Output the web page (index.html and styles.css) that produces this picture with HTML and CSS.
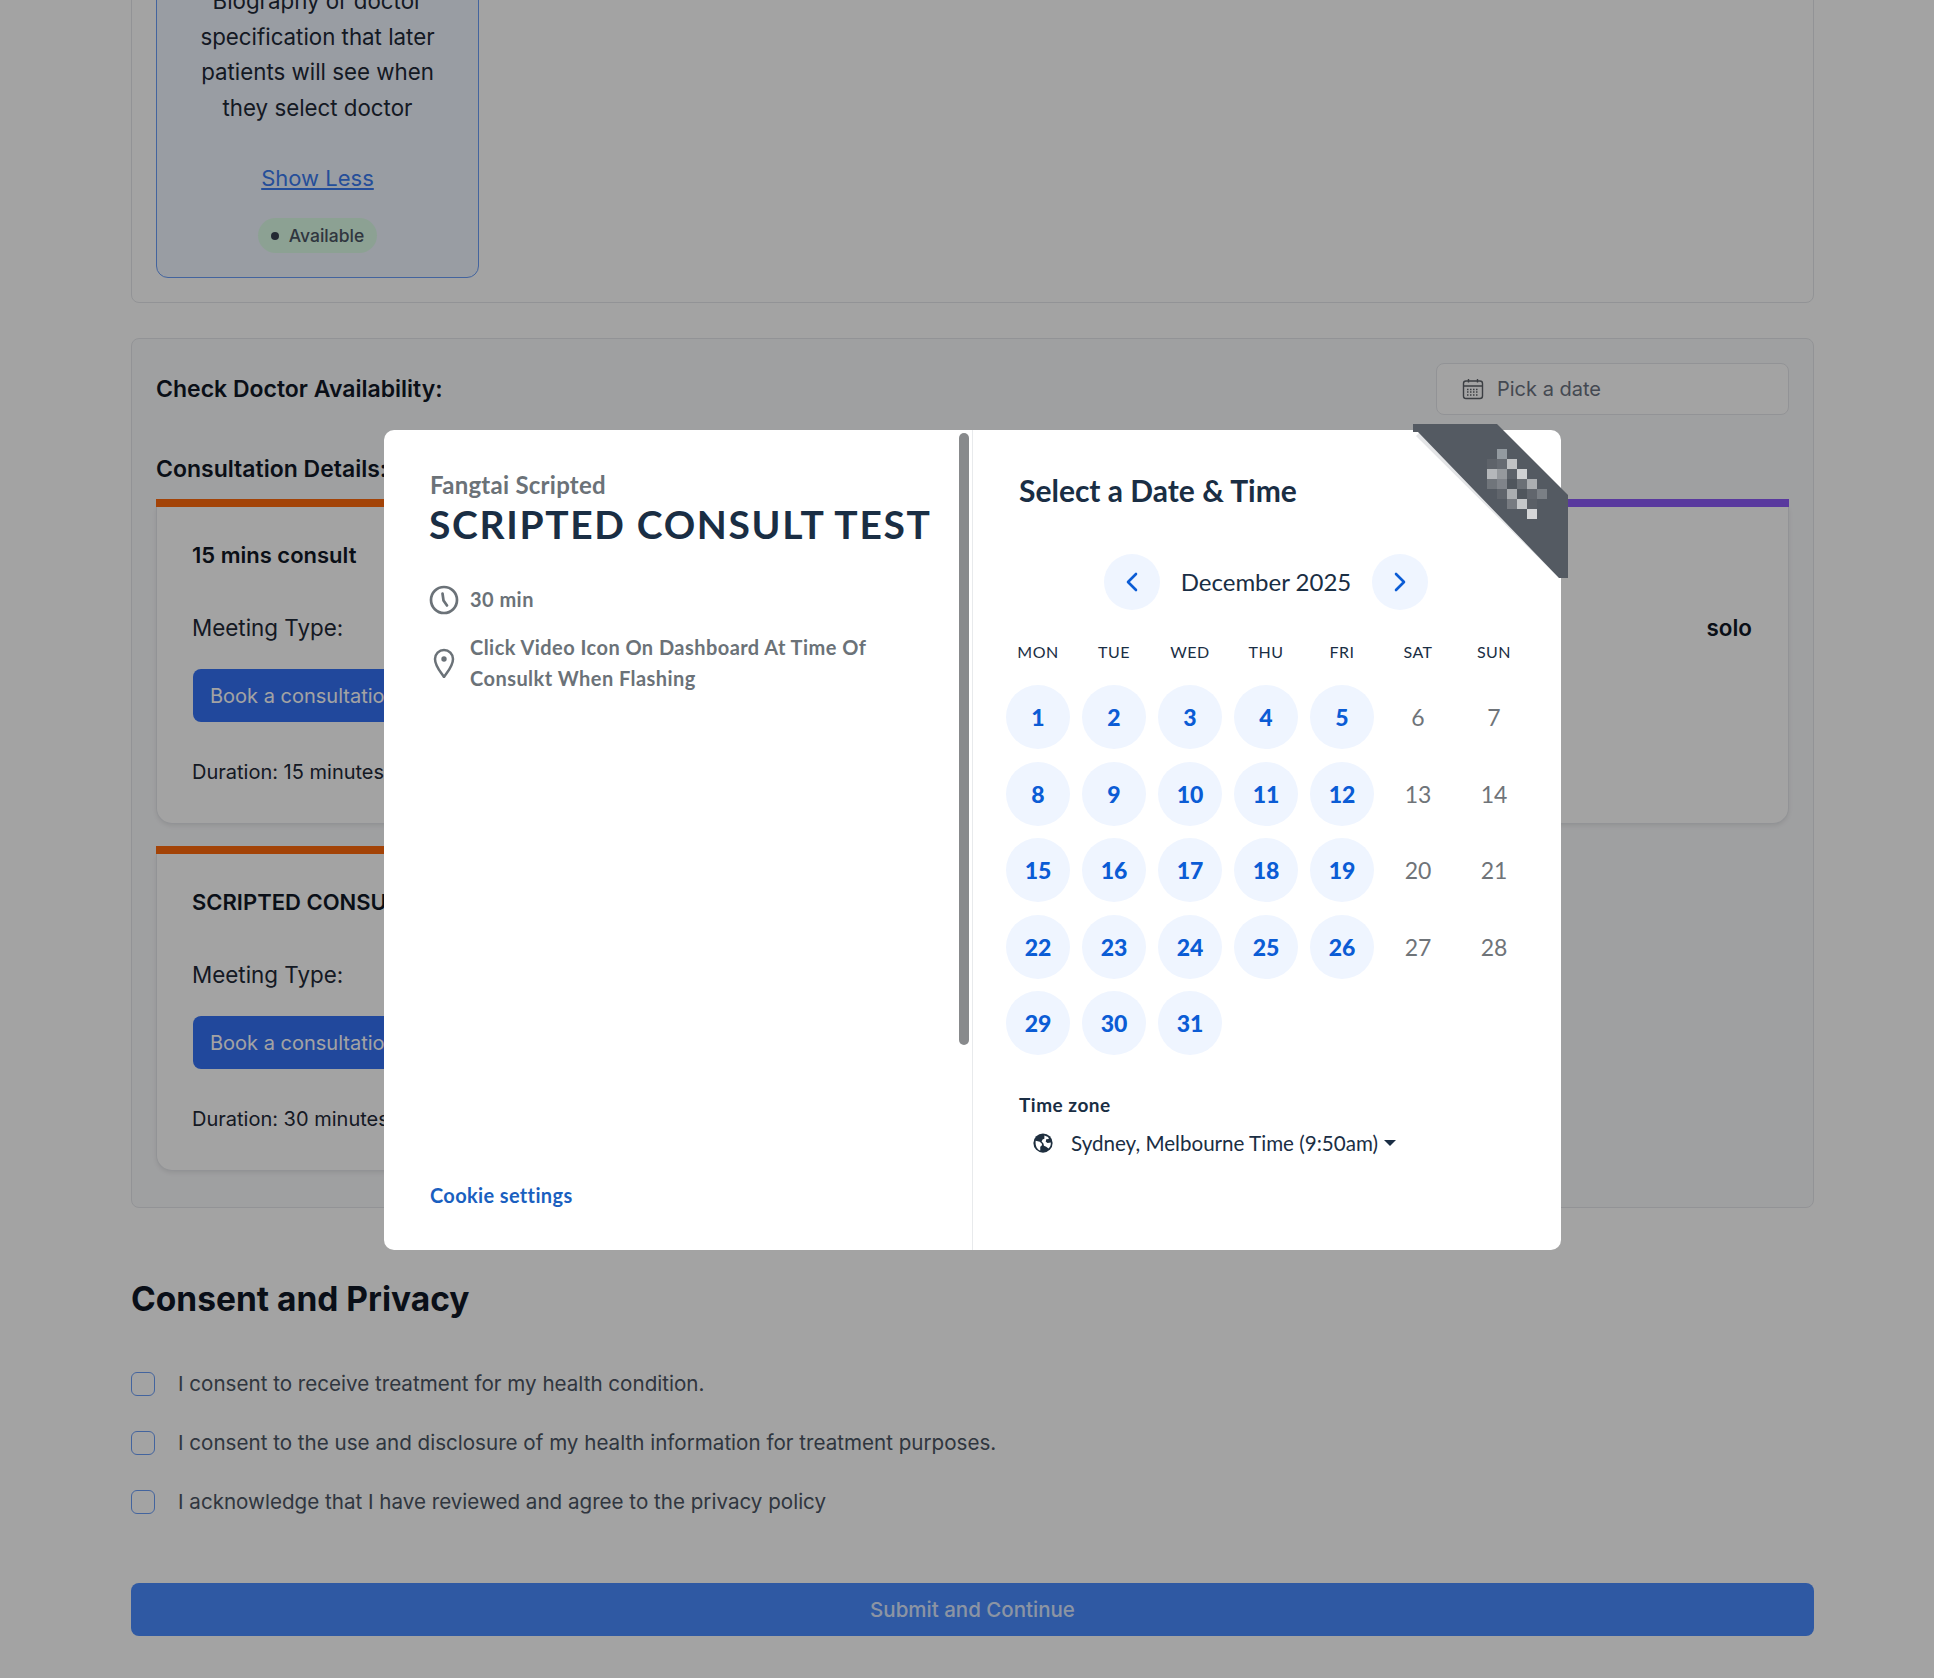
FILE: index.html
```html
<!DOCTYPE html>
<html lang="en">

<head>
    <meta charset="UTF-8">
    <meta name="viewport" content="width=device-width, initial-scale=1.0">
    <title>Book a consultation</title>
    <link rel="stylesheet" href="styles.css">
</head>

<body>
    <main class="page">
        <section class="panel doctors">
            <div class="doctor-card">
                <p class="bio">Biography or doctor specification that later patients will see when they select doctor</p>
                <a class="show-less" href="#">Show Less</a>
                <span class="pill"><i class="pill-dot"></i>Available</span>
            </div>
        </section>

        <section class="panel availability">
            <div class="avail-head">
                <h3>Check Doctor Availability:</h3>
                <div class="date-input">
                    <svg class="cal-icon" viewBox="0 0 24 24" fill="none" stroke="#5d6268" stroke-width="1.4">
                        <rect x="2.5" y="4" width="19" height="17.5" rx="2.5"/>
                        <path d="M2.5 9h19M7.5 2v3.500M16.500 2v3.500"/>
                        <path d="M6 12.500h12M6 15h12M6 18h12" stroke-dasharray="1.500 1.500"/>
                    </svg>
                    <span>Pick a date</span>
                </div>
            </div>

            <h3 class="details-title">Consultation Details:</h3>

            <div class="consult-card">
                <div class="accent-row"><span class="accent orange"></span><span class="accent purple"></span></div>
                <div class="consult-body">
                    <h4>15 mins consult</h4>
                    <div class="meeting-row"><span>Meeting Type:</span><strong>solo</strong></div>
                    <button class="book-btn">Book a consultation</button>
                    <p class="duration">Duration: 15 minutes</p>
                </div>
            </div>

            <div class="consult-card second">
                <div class="accent-row"><span class="accent orange"></span></div>
                <div class="consult-body">
                    <h4>SCRIPTED CONSULT TEST</h4>
                    <div class="meeting-row"><span>Meeting Type:</span></div>
                    <button class="book-btn">Book a consultation</button>
                    <p class="duration">Duration: 30 minutes</p>
                </div>
            </div>
        </section>

        <h2 class="consent-title">Consent and Privacy</h2>
        <div class="consent-list">
            <label class="consent-row"><span class="check"></span>I consent to receive treatment for my health condition.</label>
            <label class="consent-row"><span class="check"></span>I consent to the use and disclosure of my health information for treatment purposes.</label>
            <label class="consent-row"><span class="check"></span>I acknowledge that I have reviewed and agree to the privacy policy</label>
        </div>
        <button class="submit-btn">Submit and Continue</button>
    </main>

    <div class="overlay"></div>

    <div class="modal">
        <div class="event-pane">
            <div class="scroll-thumb"></div>
            <div class="host">Fangtai Scripted</div>
            <h1 class="event-name">SCRIPTED CONSULT TEST</h1>
            <div class="event-meta duration-meta">
                <svg class="meta-icon" viewBox="0 0 30 30" fill="none" stroke="#6b7278" stroke-width="2.700" stroke-linecap="round">
                    <circle cx="15" cy="15" r="13"/>
                    <path d="M13.500 8.500l1 7 3.500 5"/>
                </svg>
                <span>30 min</span>
            </div>
            <div class="event-meta location-meta">
                <svg class="meta-icon" viewBox="0 0 30 30" fill="none" stroke="#6b7278" stroke-width="2.500">
                    <path d="M15 29C11 23 6 18 6 11a9 9 0 0 1 18 0C24 18 19 23 15 29z"/>
                    <circle cx="15" cy="11" r="2.700" fill="#6b7278" stroke="none"/>
                </svg>
                <span>Click Video Icon On Dashboard At Time Of Consulkt When Flashing</span>
            </div>
            <a class="cookie-link" href="#">Cookie settings</a>
        </div>

        <div class="date-pane">
            <h2 class="date-title">Select a Date &amp; Time</h2>
            <div class="month-nav">
                <span class="nav-btn">
                    <svg viewBox="0 0 16 24" fill="none" stroke="#0b5cd5" stroke-width="2.600" stroke-linecap="round" stroke-linejoin="round"><path d="M12 4l-8 8 8 8"/></svg>
                </span>
                <span class="month-label">December 2025</span>
                <span class="nav-btn">
                    <svg viewBox="0 0 16 24" fill="none" stroke="#0b5cd5" stroke-width="2.600" stroke-linecap="round" stroke-linejoin="round"><path d="M4 4l8 8-8 8"/></svg>
                </span>
            </div>

            <div class="cal-grid">
                <span class="dow">MON</span><span class="dow">TUE</span><span class="dow">WED</span><span class="dow">THU</span><span class="dow">FRI</span><span class="dow">SAT</span><span class="dow">SUN</span>
                <span class="day open">1</span><span class="day open">2</span><span class="day open">3</span><span class="day open">4</span><span class="day open">5</span><span class="day">6</span><span class="day">7</span>
                <span class="day open">8</span><span class="day open">9</span><span class="day open">10</span><span class="day open">11</span><span class="day open">12</span><span class="day">13</span><span class="day">14</span>
                <span class="day open">15</span><span class="day open">16</span><span class="day open">17</span><span class="day open">18</span><span class="day open">19</span><span class="day">20</span><span class="day">21</span>
                <span class="day open">22</span><span class="day open">23</span><span class="day open">24</span><span class="day open">25</span><span class="day open">26</span><span class="day">27</span><span class="day">28</span>
                <span class="day open">29</span><span class="day open">30</span><span class="day open">31</span>
            </div>

            <div class="tz-label">Time zone</div>
            <div class="tz-row">
                <svg class="globe" viewBox="0 0 24 24">
                    <circle cx="12" cy="12" r="10.500" fill="#1f2f3f"/>
                    <path d="M4 9.500l4.500 1 2.500 2.500-.5 2-1.500 1v4.200C6 19.300 3.300 15.500 4 9.500zM13.500 3.800l4 1.700 1 2-3 .5-.5 2.500 2 1.500 3.500-.5c.3 2.800-.7 5-2.500 6.500l-2.500-2-2.500-1-.5-2.500-2-2.200 1-2 2-1z" fill="#fff"/>
                </svg>
                <span>Sydney, Melbourne Time (9:50am)</span>
                <i class="tz-caret"></i>
            </div>
        </div>

        <!-- corner ribbon, pixelated in the source -->
        <svg class="ribbon" viewBox="0 0 156 155" width="156" height="155">
            <polygon points="6,9 149,152 146,154 3,12" fill="#e4e5e7"/>
            <polygon points="0,0 84,0 155,71 155,154 146,154 5,8 0,8" fill="#545a62"/>
            <g>
                <rect x="84" y="25" width="10" height="10" fill="#939aa0"/>
                <rect x="74" y="35" width="10" height="10" fill="#5e636a"/>
                <rect x="84" y="35" width="10" height="10" fill="#666b72"/>
                <rect x="94" y="35" width="10" height="10" fill="#c0c2c4"/>
                <rect x="74" y="45" width="10" height="10" fill="#b4b7ba"/>
                <rect x="84" y="45" width="10" height="10" fill="#95999d"/>
                <rect x="94" y="45" width="10" height="10" fill="#5c6269"/>
                <rect x="104" y="45" width="10" height="10" fill="#cfd1d3"/>
                <rect x="74" y="55" width="10" height="10" fill="#70757b"/>
                <rect x="84" y="55" width="10" height="10" fill="#80848a"/>
                <rect x="94" y="55" width="10" height="10" fill="#50565d"/>
                <rect x="104" y="55" width="10" height="10" fill="#6b7076"/>
                <rect x="114" y="55" width="10" height="10" fill="#abaeb1"/>
                <rect x="84" y="65" width="10" height="10" fill="#60656c"/>
                <rect x="94" y="65" width="10" height="10" fill="#aaadb0"/>
                <rect x="104" y="65" width="10" height="10" fill="#50565d"/>
                <rect x="114" y="65" width="10" height="10" fill="#61666d"/>
                <rect x="124" y="65" width="10" height="10" fill="#7a7f85"/>
                <rect x="94" y="75" width="10" height="10" fill="#777b81"/>
                <rect x="104" y="75" width="10" height="10" fill="#c5c7c9"/>
                <rect x="114" y="75" width="10" height="10" fill="#5a5f66"/>
                <rect x="114" y="85" width="10" height="10" fill="#d5d6d8"/>
            </g>
        </svg>
    </div>
</body>

</html>
```
FILE: styles.css
```css
* {
    box-sizing: border-box;
    margin: 0;
}

body {
    height: 1678px;
    overflow: hidden;
    background-color: #fff;
    font-family: "Inter", "Liberation Sans", sans-serif;
    color: #111827;
    position: relative;
}

.page {
    margin: -59px 120px 0 131px;
}

.panel {
    border: 1px solid #e5e7eb;
    border-radius: 8px;
    padding: 0 24px;
}

/* doctor card, scrolled partly off screen */
.doctors {
    padding-bottom: 24px;
}

.doctor-card {
    width: 323px;
    padding: 40px 24px 24px;
    border: 1.5px solid #6a9df8;
    border-radius: 12px;
    background-color: #eff6ff;
    display: flex;
    flex-direction: column;
    align-items: center;
    text-align: center;
}

.bio {
    font-size: 22.300px;
    line-height: 35.500px;
    color: #1f2937;
}

.show-less {
    margin-top: 36px;
    font-size: 22px;
    line-height: 35px;
    color: #3b7bf0;
}

.pill {
    margin-top: 22px;
    height: 35px;
    padding: 0 13px;
    display: inline-flex;
    align-items: center;
    gap: 10px;
    border-radius: 18px;
    background-color: #dcfce7;
    font-size: 17.500px;
    font-weight: 500;
    color: #4b5563;
}

.pill-dot {
    width: 8px;
    height: 8px;
    border-radius: 50%;
    background-color: #374151;
}

.availability {
    margin-top: 35px;
    padding: 24px 24px 36px;
    background-color: #f9fafc;
}

.avail-head {
    display: flex;
    justify-content: space-between;
    align-items: center;
}

h3 {
    font-size: 23px;
    line-height: 33px;
    font-weight: 600;
}

.date-input {
    width: 353px;
    height: 52px;
    padding: 0 24px;
    display: flex;
    align-items: center;
    gap: 12px;
    border: 1px solid #e5e7eb;
    border-radius: 8px;
    background-color: #fff;
    font-size: 20px;
    color: #6b7280;
}

.cal-icon {
    width: 24px;
    height: 24px;
}

.details-title {
    margin-top: 38px;
}

.consult-card {
    margin-top: 13px;
}

/* right edge sits behind the popup */
.consult-card.second {
    margin-top: 22px;
    width: 700px;
}

.accent-row {
    display: flex;
    height: 8px;
}

.accent {
    display: block;
    flex: 1;
}

.orange {
    background-color: #ff6a0b;
}

.purple {
    background-color: #8c5af7;
}

.consult-body {
    padding: 32px 36px 36px 35px;
    border: 1px solid #e5e7eb;
    border-top: none;
    border-radius: 0 0 16px 16px;
    background-color: #fff;
    box-shadow: 0 2px 4px rgba(0, 0, 0, .08);
}

h4 {
    font-size: 22px;
    line-height: 32px;
    font-weight: 600;
}

.meeting-row {
    margin-top: 41px;
    display: flex;
    justify-content: space-between;
    font-size: 22.400px;
    line-height: 32px;
    color: #1f2937;
}

.meeting-row strong {
    font-weight: 600;
    color: #111827;
}

.book-btn {
    display: block;
    margin: 25px 0 0 1px;
    height: 53px;
    padding: 0 17px;
    border: none;
    border-radius: 8px;
    background-color: #3571f5;
    font: 400 20px "Inter", sans-serif;
    color: #fff;
}

.duration {
    margin-top: 35px;
    font-size: 20px;
    line-height: 30px;
    color: #1f2937;
}

.consent-title {
    margin-top: 70.500px;
    font-size: 33.500px;
    line-height: 40px;
    font-weight: 700;
}

.consent-list {
    margin-top: 53px;
    display: flex;
    flex-direction: column;
    gap: 35px;
}

.consent-row {
    display: flex;
    align-items: center;
    gap: 23px;
    height: 24px;
    font-size: 20.600px;
    color: #4b5563;
}

.check {
    width: 24px;
    height: 24px;
    border: 1.5px solid #6a9df8;
    border-radius: 6px;
    background-color: #fff;
}

.submit-btn {
    display: block;
    width: 100%;
    margin-top: 69px;
    height: 53px;
    border: none;
    border-radius: 8px;
    background-color: #4a8cff;
    font: 500 20.500px "Inter", sans-serif;
    color: #dce8ff;
}

.overlay {
    position: absolute;
    inset: 0;
    background-color: rgba(0, 0, 0, .36);
}

/* booking popup */
.modal {
    position: absolute;
    left: 384px;
    top: 430px;
    width: 1177px;
    height: 820px;
    display: flex;
    border-radius: 10px;
    background-color: #fff;
    font-family: "Lato", "Open Sans", sans-serif;
    color: #1a2e44;
}

.event-pane {
    position: relative;
    width: 589px;
    padding: 42px 0 41px 46px;
    border-right: 1px solid #e8eaec;
    display: flex;
    flex-direction: column;
}

.scroll-thumb {
    position: absolute;
    left: 575px;
    top: 3px;
    width: 10px;
    height: 612px;
    border-radius: 5px;
    background-color: #888a8c;
}

.host {
    font-size: 24px;
    line-height: 26px;
    font-weight: 700;
    letter-spacing: .25px;
    color: #6b7278;
}

.event-name {
    margin-top: 2px;
    margin-left: -1px;
    font-size: 39px;
    line-height: 49px;
    font-weight: 700;
    letter-spacing: 1.650px;
}

.event-meta {
    margin-left: -1px;
    width: 472px;
    display: flex;
    align-items: center;
    gap: 11px;
    font-size: 20px;
    line-height: 31px;
    font-weight: 700;
    letter-spacing: .45px;
    color: #6b7278;
}

.duration-meta {
    margin-top: 35px;
}

.location-meta {
    margin-top: 17px;
}

.meta-icon {
    flex: none;
    width: 30px;
    height: 30px;
}

.cookie-link {
    margin-top: auto;
    font-size: 20px;
    line-height: 28px;
    font-weight: 700;
    letter-spacing: .35px;
    color: #1a5fc0;
    text-decoration: none;
}

.date-pane {
    flex: 1;
    padding: 42px 0 0 33px;
}

.date-title {
    margin-left: 13px;
    font-size: 30px;
    line-height: 36px;
    font-weight: 700;
}

.month-nav {
    margin-top: 46px;
    width: 520px;
    display: flex;
    align-items: center;
    justify-content: center;
    gap: 21px;
}

.nav-btn {
    width: 56px;
    height: 56px;
    border-radius: 50%;
    background-color: #eff5ff;
    display: flex;
    align-items: center;
    justify-content: center;
}

.nav-btn svg {
    width: 16px;
    height: 24px;
}

.month-label {
    font-size: 24px;
    line-height: 28px;
}

.cal-grid {
    margin-top: 30px;
    display: grid;
    grid-template-columns: repeat(7, 64px);
    column-gap: 12px;
    row-gap: 12.400px;
}

.dow {
    height: 24px;
    margin-bottom: 9px;
    text-align: center;
    font-size: 16px;
    line-height: 24px;
    letter-spacing: .5px;
}

.day {
    width: 64px;
    height: 64px;
    display: flex;
    align-items: center;
    justify-content: center;
    font-size: 23px;
    color: #6f7479;
}

.day.open {
    border-radius: 50%;
    background-color: #eff5ff;
    color: #0b5cd5;
    font-weight: 900;
}

.tz-label {
    margin: 38px 0 0 13px;
    font-size: 19px;
    line-height: 24px;
    font-weight: 700;
    letter-spacing: .5px;
}

.tz-row {
    margin: 12px 0 0 26px;
    display: flex;
    align-items: center;
    gap: 17px;
    font-size: 20.600px;
    line-height: 28px;
}

.globe {
    width: 22px;
    height: 22px;
}

.tz-caret {
    margin-left: -11px;
    border-left: 6px solid transparent;
    border-right: 6px solid transparent;
    border-top: 6px solid #1a2e44;
}

.ribbon {
    position: absolute;
    left: 1029px;
    top: -6px;
}
```
